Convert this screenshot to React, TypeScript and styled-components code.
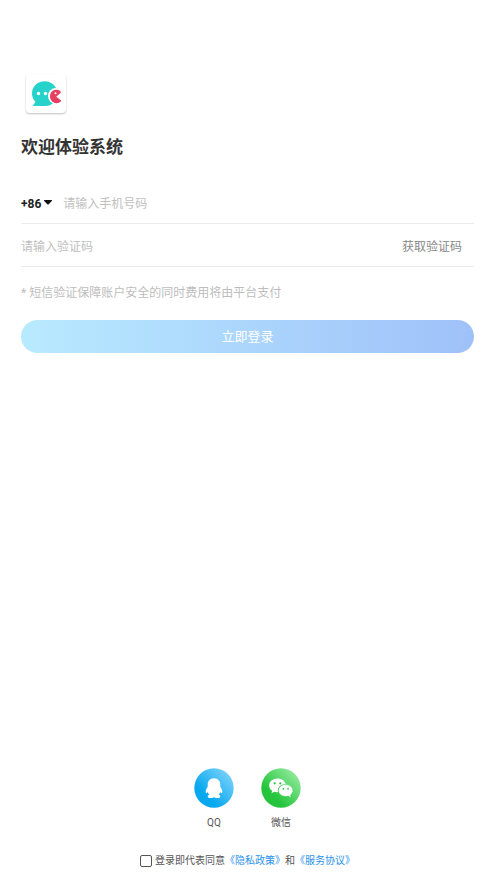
import React, { useState } from "react";
import styled, { createGlobalStyle } from "styled-components";

const GlobalStyle = createGlobalStyle`
  *, *::before, *::after { box-sizing: border-box; }
  body {
    margin: 0;
    background: #fff;
    color: #333;
    font-family: Roboto, "Noto Sans CJK SC", sans-serif;
  }
  button, input, select { font: inherit; }
`;

const Page = styled.main`
  display: flex;
  flex-direction: column;
  min-height: 100vh;
  padding: 74px 21px 11px;
`;

const LogoCard = styled.div`
  display: flex;
  width: 40px;
  height: 39px;
  margin-left: 5px;
  border-radius: 4px;
  box-shadow: 0 1px 2px rgba(0, 0, 0, 0.25);
`;

const Title = styled.h1`
  margin: 22px 0 0;
  font-size: 17px;
  line-height: 24px;
  font-weight: 700;
`;

const Form = styled.form`
  display: flex;
  flex-direction: column;
  margin-top: 22px;
`;

const Field = styled.div`
  display: flex;
  align-items: center;
  height: 43px;
  padding-top: 3px;
  border-bottom: 1px solid #ebebeb;
`;

const AreaCode = styled.button`
  display: flex;
  align-items: center;
  gap: 3px;
  margin-right: 11px;
  padding: 0;
  border: 0;
  background: none;
  color: #222;
  font-size: 12px;
  line-height: 16px;
  font-weight: 700;
`;

const TextInput = styled.input`
  flex: 1;
  min-width: 0;
  padding: 0;
  border: 0;
  outline: 0;
  background: none;
  color: #333;
  font-size: 12px;
  line-height: 18px;
  &::placeholder { color: #c0c0c0; opacity: 1; }
`;

const CodeButton = styled.button`
  padding: 0 12px;
  border: 0;
  background: none;
  color: #888;
  font-size: 12px;
  line-height: 18px;
`;

const Note = styled.p`
  margin: 17px 0 0;
  color: #bdbdbd;
  font-size: 12px;
  line-height: 18px;
`;

const SubmitButton = styled.button`
  height: 33px;
  margin-top: 18px;
  padding: 0;
  border: 0;
  border-radius: 17px;
  background: linear-gradient(90deg, #b8eaff, #9fc1f9);
  color: #fff;
  font-size: 13px;
  line-height: 33px;
`;

const Footer = styled.footer`
  display: flex;
  flex-direction: column;
  align-items: center;
  gap: 22px;
  margin-top: auto;
`;

const Providers = styled.div`
  display: flex;
  gap: 27px;
`;

const Provider = styled.button`
  display: flex;
  flex-direction: column;
  align-items: center;
  gap: 7px;
  padding: 0;
  border: 0;
  background: none;
  color: #555;
  font-size: 10px;
  line-height: 16px;
`;

const Agreement = styled.div`
  display: flex;
  align-items: center;
  color: #555;
  font-size: 10px;
  line-height: 16px;
`;

const AgreeBox = styled.input`
  appearance: none;
  width: 12px;
  height: 12px;
  margin: 0 3px 0 0;
  border: 1px solid #555;
  border-radius: 2px;
  background: #fff;
  &:checked { border-color: #2a92e8; background: #2a92e8; }
`;

const PolicyLink = styled.a`
  color: #2a92e8;
  text-decoration: none;
`;

const BrandLogo = () => (
  <svg width="40" height="40" viewBox="0 0 40 40" aria-hidden="true">
    <path
      fill="#26d3cb"
      d="M18.500 7.200c-7 0-12.500 5.200-12.500 12 0 3.600 1.300 6.300 3.400 8.300-.3 1.300-1 2.500-2.200 3.500-.5.500-.2 1 .5 1h11.800c7 0 11.800-5.800 11.800-12.800 0-6.800-5.500-12-12.800-12z"
    />
    <circle cx="30" cy="22" r="8" fill="#fff" />
    <path
      fill="#e83e61"
      d="M34.300 17.200c-3-2.500-8.300-1.900-9.900 2.600-1.600 4.700 1.500 9.400 6.100 9.400 1.700 0 3-.5 4.200-1.600.5-.5.400-1.100-.1-1.500l-4.400-3.300 4.300-3.900c.5-.5.400-1.300-.2-1.700z"
    />
    <circle cx="29.500" cy="19.300" r="1" fill="#fff" />
    <g fill="#fff">
      <circle cx="12.500" cy="19.500" r="1.700" />
      <circle cx="19.500" cy="19.500" r="1.700" />
    </g>
  </svg>
);

const Caret = () => (
  <svg width="8" height="7" viewBox="0 0 8 7" aria-hidden="true">
    <path fill="#111" d="M.6 0h6.800c.6 0 .8.600.4 1L4.700 4.200c-.4.400-1 .4-1.400 0L.2 1C-.2.600 0 0 .6 0z" />
  </svg>
);

const QQIcon = () => (
  <svg width="40" height="40" viewBox="0 0 40 40" aria-hidden="true">
    <defs>
      <linearGradient id="qq" x1="0.15" y1="0.85" x2="0.9" y2="0.1">
        <stop offset="0.2" stopColor="#08a8ef" />
        <stop offset="1" stopColor="#7bd2fc" />
      </linearGradient>
    </defs>
    <circle cx="20" cy="20" r="19.700" fill="url(#qq)" />
    <path
      fill="#fff"
      d="M20 10.300c-4 0-6.300 2.900-6.300 6.500 0 .7.100 1.300.1 1.800-1 1.500-2.100 3.300-2.100 5 0 1.200.3 1.700.7 1.700.5 0 1-.6 1.400-1.200.3 1 .8 1.900 1.500 2.600-1 .4-1.600 1-1.600 1.700 0 1.200 1.400 1.600 3.200 1.600 1.400 0 2.500-.4 3.100-1 .6.600 1.700 1 3.100 1 1.800 0 3.200-.4 3.200-1.600 0-.7-.6-1.300-1.600-1.700.7-.7 1.200-1.600 1.500-2.600.4.600.9 1.200 1.400 1.200.4 0 .7-.5.7-1.700 0-1.700-1.100-3.500-2.100-5 0-.5.100-1.100.1-1.800 0-3.600-2.300-6.500-6.300-6.500z"
    />
  </svg>
);

const WeChatIcon = () => (
  <svg width="40" height="40" viewBox="0 0 40 40" aria-hidden="true">
    <defs>
      <linearGradient id="wechat" x1="0.15" y1="0.85" x2="0.9" y2="0.1">
        <stop offset="0.2" stopColor="#24c53c" />
        <stop offset="1" stopColor="#96eba0" />
      </linearGradient>
    </defs>
    <circle cx="20" cy="20" r="19.700" fill="url(#wechat)" />
    <path
      fill="#fff"
      d="M16.500 10.500c-4.700 0-8.300 3-8.300 6.900 0 2.200 1.100 4 3 5.300l-.8 2.500 3-1.500c1 .3 2 .5 3.100.5h.6c-1.300-4.500 2.300-8.300 7.400-8.300h.1c-.8-3.200-4.200-5.400-8.100-5.400z"
    />
    <path
      fill="#fff"
      d="M24.700 16.800c-4 0-7 2.500-7 5.700s3 5.700 7 5.700c.9 0 1.700-.1 2.500-.4l2.600 1.400-.7-2.200c1.500-1 2.500-2.600 2.500-4.500 0-3.200-3-5.700-6.900-5.700z"
    />
    <g fill="#2bc342">
      <circle cx="13.700" cy="15.300" r="1.100" />
      <circle cx="19.300" cy="15.300" r="1.100" />
      <circle cx="22.400" cy="20.800" r=".9" />
      <circle cx="27" cy="20.800" r=".9" />
    </g>
  </svg>
);

export default function App() {
  const [agreed, setAgreed] = useState(false);

  return (
    <>
      <GlobalStyle />
      <Page>
        <LogoCard>
          <BrandLogo />
        </LogoCard>
        <Title>欢迎体验系统</Title>
        <Form onSubmit={(event) => event.preventDefault()}>
          <Field>
            <AreaCode type="button">
              +86
              <Caret />
            </AreaCode>
            <TextInput type="tel" aria-label="手机号码" placeholder="请输入手机号码" />
          </Field>
          <Field>
            <TextInput type="text" inputMode="numeric" aria-label="验证码" placeholder="请输入验证码" />
            <CodeButton type="button">获取验证码</CodeButton>
          </Field>
          <Note>* 短信验证保障账户安全的同时费用将由平台支付</Note>
          <SubmitButton type="submit">立即登录</SubmitButton>
        </Form>
        <Footer>
          <Providers>
            <Provider type="button">
              <QQIcon />
              QQ
            </Provider>
            <Provider type="button">
              <WeChatIcon />
              微信
            </Provider>
          </Providers>
          <Agreement>
            <AgreeBox
              id="agree"
              type="checkbox"
              checked={agreed}
              onChange={(event) => setAgreed(event.target.checked)}
            />
            <label htmlFor="agree">登录即代表同意</label>
            <PolicyLink href="#privacy">《隐私政策》</PolicyLink>
            和
            <PolicyLink href="#terms">《服务协议》</PolicyLink>
          </Agreement>
        </Footer>
      </Page>
    </>
  );
}
